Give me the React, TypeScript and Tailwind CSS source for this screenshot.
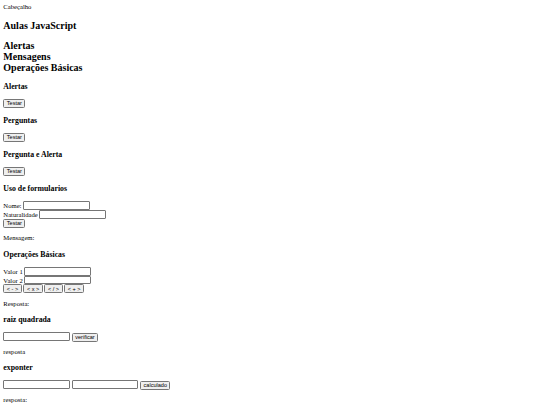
import React from "react";

const btn =
  "inline-block align-baseline h-[9px] px-[2.5px] border-[0.8px] border-[#767676] rounded-[1.5px] bg-[#efefef] text-black text-[5.56px] leading-[normal] font-['Liberation_Sans',Arial,sans-serif]";
const input =
  "inline-block align-baseline h-[8.9px] border-[0.8px] border-[#767676] rounded-[1px] bg-white";
const h3 = "text-[7.8px] font-bold leading-[normal] my-[8.1px]";
const p = "mt-[6.5px] mb-[7px]";

export default function App() {
  return (
    <div className="bg-white min-h-[405px] p-[3.33px] text-black text-[6.67px] leading-[normal] font-['Liberation_Serif','Times_New_Roman',serif]">
      <header>
        <div>Cabeçalho</div>
        <h2 className="text-[10px] font-bold leading-[normal] mt-[9.6px] mb-[8.8px]">
          Aulas JavaScript
        </h2>
      </header>

      <nav className="text-[10px] font-bold leading-[normal] mb-[8.8px]">
        <div>Alertas</div>
        <div>Mensagens</div>
        <div>Operações Básicas</div>
      </nav>

      <h3 className={h3}>Alertas</h3>
      <button className={btn}>Testar</button>

      <h3 className={h3}>Perguntas</h3>
      <button className={btn}>Testar</button>

      <h3 className={h3}>Pergunta e Alerta</h3>
      <button className={btn}>Testar</button>

      <h3 className={h3}>Uso de formularios</h3>
      <form>
        Nome: <input className={`${input} w-[67px]`} />
        <br />
        Naturalidade <input className={`${input} w-[67px]`} />
        <br />
        <button type="button" className={btn}>
          Testar
        </button>
      </form>
      <p className={p}>Mensagem:</p>

      <h3 className={h3}>Operações Básicas</h3>
      <div>
        Valor 1 <input className={`${input} w-[67px]`} />
        <br />
        Valor 2 <input className={`${input} w-[67px]`} />
        <br />
        <button className={btn}>&lt; - &gt;</button>{" "}
        <button className={btn}>&lt; x &gt;</button>{" "}
        <button className={btn}>&lt; / &gt;</button>{" "}
        <button className={btn}>&lt; + &gt;</button>
      </div>
      <p className={p}>Resposta:</p>

      <h3 className={h3}>raiz quadrada</h3>
      <div>
        <input className={`${input} w-[66.7px]`} />{" "}
        <button className={btn}>verificar</button>
      </div>
      <p className={p}>resposta</p>

      <h3 className={h3}>exponter</h3>
      <div>
        <input className={`${input} w-[66.7px]`} />{" "}
        <input className={`${input} w-[66.7px]`} />{" "}
        <button className={btn}>calculado</button>
      </div>
      <p className={p}>resposta:</p>
    </div>
  );
}
